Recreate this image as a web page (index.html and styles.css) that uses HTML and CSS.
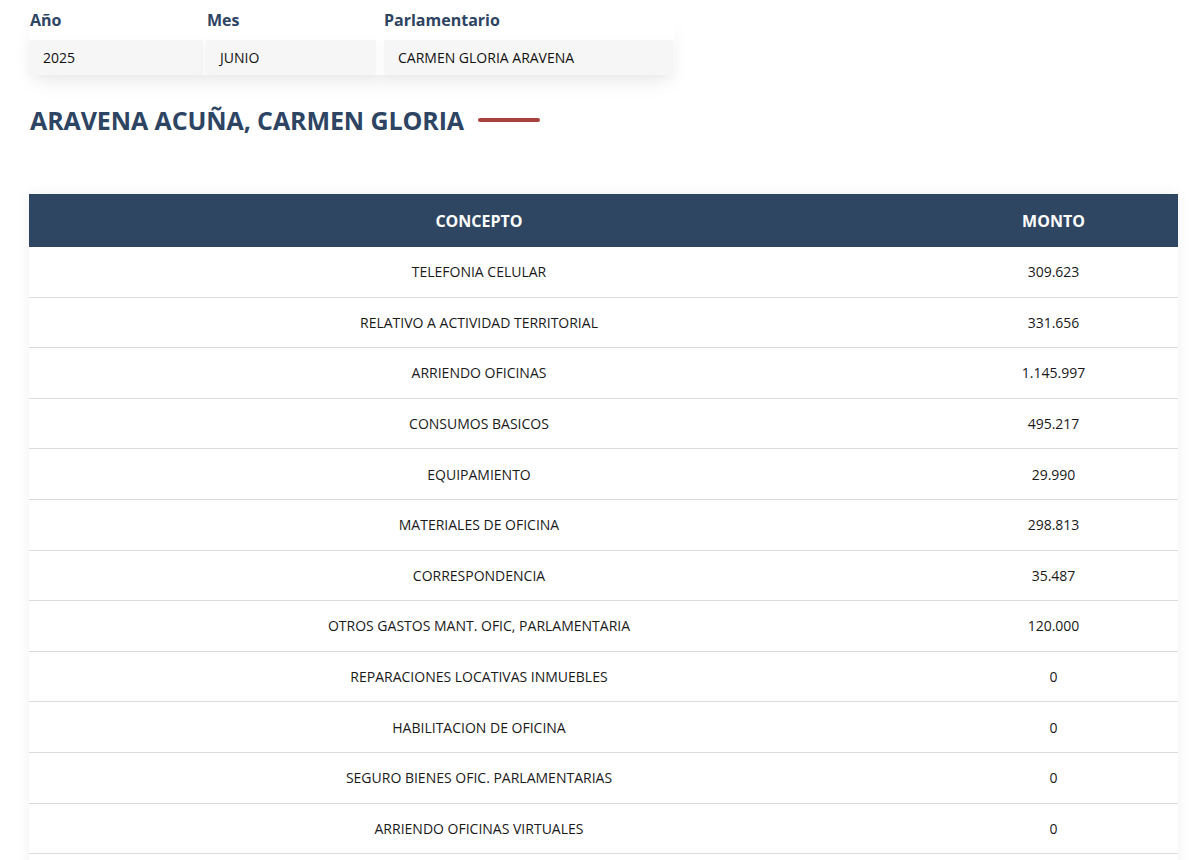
FILE: index.html
```html
<!DOCTYPE html>
<html lang="es">
<head>
<meta charset="utf-8">
<link rel="stylesheet" href="styles.css">
</head>
<body>
<div class="page">
  <div class="filters">
    <div class="field f1">
      <div class="label">Año</div>
      <div class="box">2025</div>
    </div>
    <div class="field f2">
      <div class="label">Mes</div>
      <div class="box">JUNIO</div>
    </div>
    <div class="field f3">
      <div class="label">Parlamentario</div>
      <div class="box">CARMEN GLORIA ARAVENA</div>
    </div>
  </div>
  <h1 class="title">ARAVENA ACUÑA, CARMEN GLORIA <span class="bar"></span></h1>
  <table class="gastos">
    <thead>
      <tr><th class="c1">CONCEPTO</th><th class="c2">MONTO</th></tr>
    </thead>
    <tbody>
      <tr><td>TELEFONIA CELULAR</td><td>309.623</td></tr>
      <tr><td>RELATIVO A ACTIVIDAD TERRITORIAL</td><td>331.656</td></tr>
      <tr><td>ARRIENDO OFICINAS</td><td>1.145.997</td></tr>
      <tr><td>CONSUMOS BASICOS</td><td>495.217</td></tr>
      <tr><td>EQUIPAMIENTO</td><td>29.990</td></tr>
      <tr><td>MATERIALES DE OFICINA</td><td>298.813</td></tr>
      <tr><td>CORRESPONDENCIA</td><td>35.487</td></tr>
      <tr><td>OTROS GASTOS MANT. OFIC, PARLAMENTARIA</td><td>120.000</td></tr>
      <tr><td>REPARACIONES LOCATIVAS INMUEBLES</td><td>0</td></tr>
      <tr><td>HABILITACION DE OFICINA</td><td>0</td></tr>
      <tr><td>SEGURO BIENES OFIC. PARLAMENTARIAS</td><td>0</td></tr>
      <tr><td>ARRIENDO OFICINAS VIRTUALES</td><td>0</td></tr>
      <tr><td>&nbsp;</td><td>&nbsp;</td></tr>
    </tbody>
  </table>
</div>
</body>
</html>
```
FILE: styles.css
```css
html, body {
  margin: 0;
  padding: 0;
  background: #fff;
  font-family: "Open Sans", "Liberation Sans", sans-serif;
  color: #222;
  overflow: hidden;
}
.page {
  padding: 10px 22px 0 29px;
}
.filters {
  display: flex;
  width: 646px;
  box-shadow: 0 12px 22px -6px rgba(0,0,0,0.08);
}
.field {
  display: flex;
  flex-direction: column;
}
.f1 { width: 177px; }
.f2 { width: 177px; }
.f3 { width: 291px; }
.f1 .box { width: 174px; }
.f2 .box { width: 170px; }
.f3 .box { width: 290px; margin-left: 1px; }
.label {
  font-weight: 700;
  font-size: 16px;
  line-height: 20px;
  color: #2d4463;
  height: 20px;
  margin-bottom: 10px;
  padding-left: 1px;
}
.box {
  box-sizing: border-box;
  height: 35px;
  line-height: 35px;
  background: #f6f6f6;
  font-size: 14px;
  color: #111;
  padding-left: 14px;
  box-shadow: 0 2px 10px rgba(0,0,0,0.04);
}
.title {
  margin: 29px 0 0 1px;
  font-size: 25px;
  font-weight: 700;
  color: #2d4463;
  line-height: 32px;
  letter-spacing: -0.1px;
  display: flex;
  align-items: center;
}
.bar {
  display: inline-block;
  width: 62px;
  height: 4px;
  border-radius: 2px;
  background: #a8423c;
  margin-left: 14px;
  margin-top: 0;
}
.gastos {
  margin-top: 58px;
  width: 1149px;
  border-collapse: collapse;
  box-shadow: 0 0 14px rgba(0,0,0,0.06);
}
.gastos th {
  background: #2f4663;
  color: #fff;
  font-weight: 700;
  font-size: 16px;
  height: 53px;
  padding: 0;
  text-align: center;
}
.gastos .c1 { width: 900px; }
.gastos td {
  height: 49.6px;
  padding: 0;
  text-align: center;
  font-size: 14px;
  color: #1a1a1a;
  border-bottom: 1px solid #dcdcdc;
  background: #fff;
}
```
